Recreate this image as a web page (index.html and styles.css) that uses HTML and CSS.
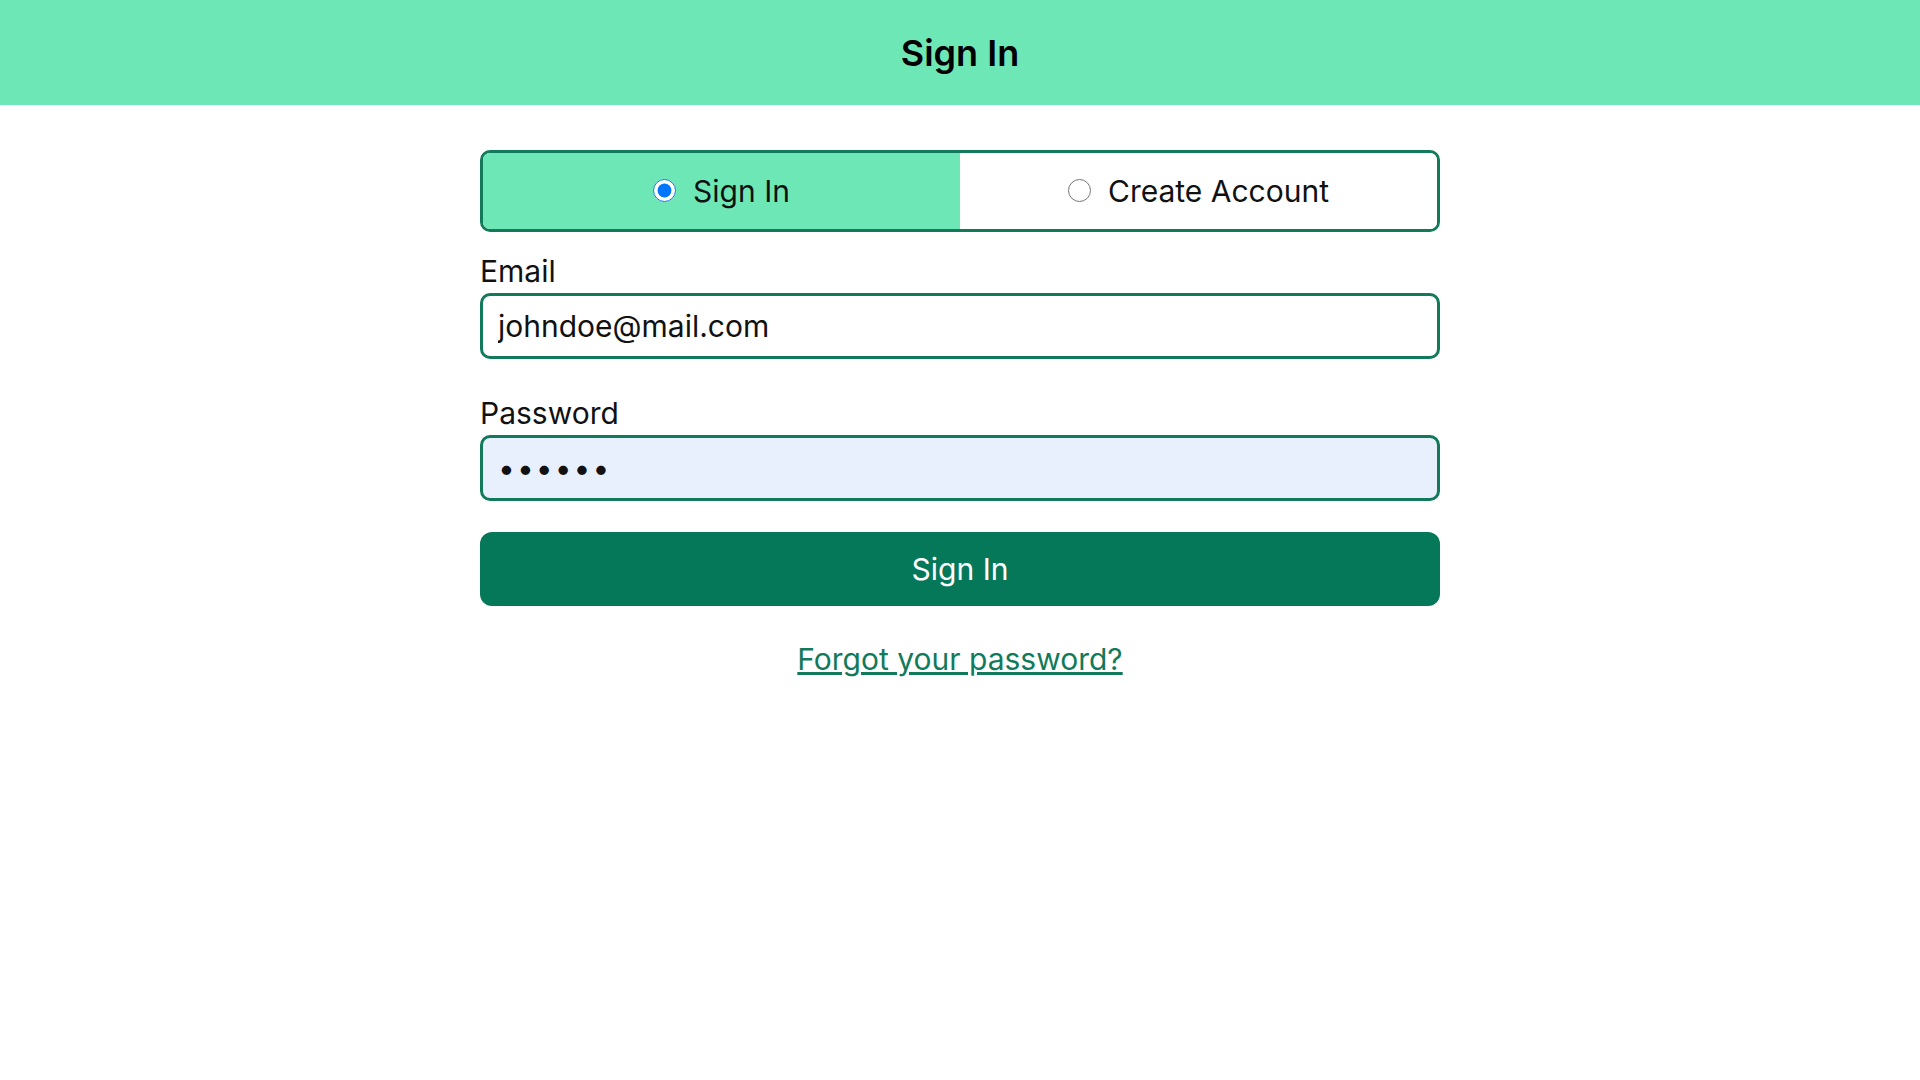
FILE: index.html
```html
<!DOCTYPE html>
<html lang="en">
<head>
<meta charset="utf-8">
<title>Sign In</title>
<link rel="stylesheet" href="styles.css">
</head>
<body>
<header class="topbar">
  <h1 class="topbar-title">Sign In</h1>
</header>
<main class="auth">
  <div class="tabs">
    <label class="tab tab-active">
      <input type="radio" name="mode" class="tab-radio" checked>
      <span>Sign In</span>
    </label>
    <label class="tab">
      <input type="radio" name="mode" class="tab-radio">
      <span>Create Account</span>
    </label>
  </div>
  <form class="form">
    <div class="field">
      <label class="field-label" for="email">Email</label>
      <input class="field-input" id="email" type="email" value="johndoe@mail.com">
    </div>
    <div class="field field-pw">
      <label class="field-label" for="password">Password</label>
      <input class="field-input field-autofill" id="password" type="password" value="secret">
    </div>
    <button type="button" class="submit">Sign In</button>
    <a class="forgot" href="#">Forgot your password?</a>
  </form>
</main>
</body>
</html>
```
FILE: styles.css
```css
* { box-sizing: border-box; }
html, body { margin: 0; padding: 0; }
body {
  font-family: Inter, "Noto Sans", sans-serif;
  color: #111;
  background: #fff;
}
.topbar {
  height: 105px;
  background: #6ee7b7;
  display: flex;
  align-items: center;
  justify-content: center;
}
.topbar-title {
  margin: 0;
  font-size: 36px;
  font-weight: 600;
  color: #000;
}
.auth {
  width: 960px;
  margin: 45px auto 0;
}
.tabs {
  display: flex;
  height: 82px;
  border: 3px solid #127a5a;
  border-radius: 10px;
  overflow: hidden;
}
.tab {
  flex: 1;
  display: flex;
  align-items: center;
  justify-content: center;
  gap: 17px;
  font-size: 30px;
  color: #111;
  background: #fff;
  cursor: pointer;
  padding-bottom: 1px;
}
.tab-active { background: #6ee7b7; }
.tab-radio {
  width: 23px;
  height: 23px;
  margin: 0;
}
.form {
  display: flex;
  flex-direction: column;
  margin-top: 17px;
}
.field { display: flex; flex-direction: column; }
.field-pw { margin-top: 32px; }
.field-label {
  font-size: 30px;
  line-height: 44px;
  color: #111;
}
.field-input {
  height: 66px;
  border: 3px solid #127a5a;
  border-radius: 10px;
  padding: 0 15px;
  font-family: inherit;
  font-size: 30px;
  color: #111;
  background: #fff;
  outline: none;
}
.field-autofill { background: #e8f0fe; letter-spacing: 2px; }
.submit {
  margin-top: 31px;
  height: 74px;
  border: none;
  border-radius: 12px;
  background: #05785a;
  color: #fff;
  font-family: inherit;
  font-size: 30px;
  cursor: pointer;
}
.forgot {
  align-self: center;
  margin-top: 31px;
  font-size: 30px;
  line-height: 44px;
  color: #127a5a;
}
```
